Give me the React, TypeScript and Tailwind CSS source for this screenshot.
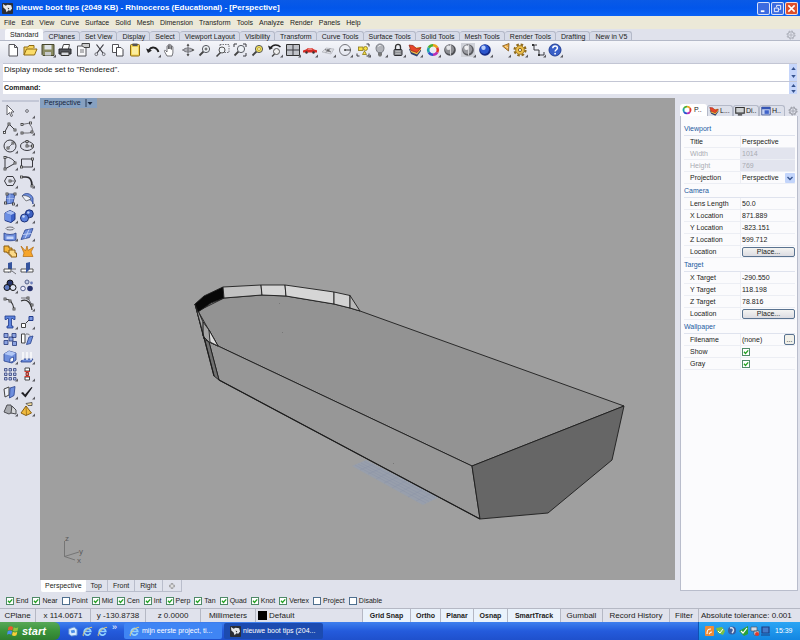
import React from "react";
import type { ReactNode } from "react";

type Tool = { name: string; art: ReactNode; flyout?: boolean };

const ink = { fill: "none", stroke: "#3a3a40", strokeWidth: 1 } as const;
const thin = { fill: "none", stroke: "#55555c", strokeWidth: 0.8 } as const;

function Art({ children }: { children: ReactNode }) {
  return (
    <svg viewBox="0 0 14 14" className="h-[14px] w-[14px] overflow-visible" aria-hidden="true">
      {children}
    </svg>
  );
}

function ToolButton({ tool }: { tool: Tool }) {
  return (
    <button type="button" aria-label={tool.name} className="flex min-w-0 flex-1 items-center justify-center">
      <Art>
        {tool.art}
        {tool.flyout && <path d="M15 11.500v3h-3z" fill="#5a5a60" />}
      </Art>
    </button>
  );
}

const Lens = ({ fill = "#eef2f6" }: { fill?: string }) => (
  <>
    <path d="M5.500 8.500 1.500 12.500" stroke="#444" strokeWidth="1.800" />
    <circle cx="8" cy="6" r="3.600" fill={fill} stroke="#55585f" strokeWidth="1" />
  </>
);

const Sphere = ({ a, b, c }: { a: string; b: string; c: string }) => (
  <>
    <circle cx="7" cy="7" r="5.800" fill={a} />
    <circle cx="6.500" cy="6.300" r="4.600" fill={b} />
    <circle cx="5.500" cy="4.800" r="2.200" fill={c} />
  </>
);

const ColorWheel = () => (
  <g fill="none" strokeWidth="2.600">
    <path d="M7 2.200A4.800 4.800 0 0 1 11.200 4.600" stroke="#e8a51c" />
    <path d="M11.200 4.600A4.800 4.800 0 0 1 11.200 9.400" stroke="#e0362c" />
    <path d="M11.200 9.400A4.800 4.800 0 0 1 7 11.800" stroke="#b82fb4" />
    <path d="M7 11.800A4.800 4.800 0 0 1 2.800 9.400" stroke="#2d4ed0" />
    <path d="M2.800 9.400A4.800 4.800 0 0 1 2.800 4.600" stroke="#1fa3ae" />
    <path d="M2.800 4.600A4.800 4.800 0 0 1 7 2.200" stroke="#4fb02c" />
  </g>
);

const Layers = () => (
  <>
    <path d="M1 6 3 11 9 13.500 13 8V5z" fill="#30406e" />
    <path d="M1.500 5 3 9 9 11.500 13 6.500 12.500 4z" fill="#f6c34c" />
    <path d="M1 2 3 7.500 9 9.500 13 4.500 8.500 5.500 5 2.500z" fill="#e8452a" stroke="#8e1f14" strokeWidth=".700" />
  </>
);

const Gear = ({ color }: { color: string }) => (
  <g fill="none" stroke={color}>
    <circle cx="7" cy="7" r="5.600" strokeWidth="1.400" strokeDasharray="2.200 2.200" />
    <circle cx="7" cy="7" r="4.500" strokeWidth="1.200" />
    <path d="M7 4v6M4 7h6" strokeWidth=".900" />
  </g>
);

const standardTools: Tool[] = [
  { name: "New", art: <path d="M3 1.500h5.500l3 3v8.500H3zM8.500 1.500v3h3" fill="#fff" stroke="#55555a" /> },
  { name: "Open", art: <><path d="M1 12V4h4l1-1.500h5V5" fill="#f7d560" stroke="#8f6b12" /><path d="M1 12 3.500 6H14l-2.500 6z" fill="#fbdc68" stroke="#8f6b12" /></> },
  { name: "Save", flyout: true, art: <><path d="M1 1.500h12v11H2L1 11.500z" fill="#8a8b62" stroke="#45462f" /><rect x="3.500" y="2" width="7" height="4.500" fill="#dfe3e6" /><rect x="4" y="9" width="6" height="3.500" fill="#c6c9cc" /></> },
  { name: "Print", art: <><path d="M4 6 5.500 1.500h6L10.500 6" fill="#fff" stroke="#444" /><path d="M1 6h12v5H1z" fill="#55575c" stroke="#26272b" /><path d="M3 9h8v3.500H3z" fill="#d8dade" stroke="#333" /></> },
  { name: "Properties", art: <><path d="M1.500 3h8.500v10H1.500z" fill="#f7f7f9" stroke="#55555a" /><path d="M6 .500h7.500v4H8L6 2.500z" fill="#ccc" stroke="#444" /><path d="M4 7h4M4 9h4" {...thin} /></> },
  { name: "Cut", art: <><path d="M3.500 1.500 10 10M10.500 1.500 4 10" {...ink} strokeWidth="1.200" /><circle cx="3.300" cy="11.200" r="1.400" {...thin} /><circle cx="10.700" cy="11.200" r="1.400" {...thin} /></> },
  { name: "Copy", art: <><path d="M1.500 1.500h6v8h-6z" fill="#fff" stroke="#55555a" /><path d="M5.500 4.500h4.500l2 2v6.500H5.500z" fill="#fff" stroke="#44444a" /></> },
  { name: "Paste", art: <><rect x="2.500" y="1.500" width="9" height="11.500" rx="1" fill="#f5d552" stroke="#8b6b14" /><rect x="4" y="4" width="6" height="7.500" fill="#fbeea0" /><rect x="4.500" y=".500" width="5" height="2.600" fill="#555" /></> },
  { name: "Undo", flyout: true, art: <><path d="M3 7C5.500 3 11 4 12.500 9" fill="none" stroke="#222" strokeWidth="1.800" /><path d="M0 5.500 2 10l4-2.500z" fill="#222" /></> },
  { name: "Pan", art: <path d="M4 13 1.500 8.500c-.6-1.200.6-1.600 1.300-.7L4 9V3.500c0-1 1.400-1 1.400 0V6 2c0-1 1.500-1 1.500 0v4-3.500c0-1 1.500-1 1.500 0V6.500 4c0-1 1.500-1 1.500 0v6L9 13z" fill="#fff" stroke="#55555a" strokeWidth=".800" /> },
  { name: "Rotate view", art: <><path d="M7 1v12M1 7h12" {...thin} /><ellipse cx="7" cy="7" rx="4.500" ry="2" {...thin} /><path d="M5.500 3 7 .500 8.500 3zM5.500 11 7 13.500 8.500 11zM11 5.500 13.500 7 11 8.500z" fill="#555" /></> },
  { name: "Zoom dynamic", art: <><Lens /><path d="M6.500 6h3M8 4.500v3" stroke="#333" strokeWidth=".800" /></> },
  { name: "Zoom window", art: <><path d="M4 1.500h9v8H4z" {...thin} strokeDasharray="1.500 1" /><path d="m4.500 9.500-4 4" stroke="#444" strokeWidth="1.600" /><circle cx="6" cy="7" r="3" fill="#eef2f6" stroke="#555" /></> },
  { name: "Zoom extents", art: <><Lens /><path d="M1 4V1h3M10 1h3v3M13 10v3h-3" {...ink} /></> },
  { name: "Zoom selected", art: <><Lens fill="#f5e25b" /><circle cx="8" cy="6" r="1.500" fill="#fff8c0" stroke="#a08c20" strokeWidth=".700" /></> },
  { name: "Undo view change", flyout: true, art: <><circle cx="8.500" cy="8.500" r="3" fill="#eee" stroke="#555" /><path d="m6.500 11-2.500 2.500" stroke="#444" strokeWidth="1.500" /><path d="M2.500 5C5 1 10 1.500 12.500 4" fill="none" stroke="#222" strokeWidth="1.500" /><path d="M0 2.500 1.500 7 5 5z" fill="#222" /></> },
  { name: "Four viewports", flyout: true, art: <><path d="M.5 1.500h13v11H.5z" fill="#c0c2c8" stroke="#333" /><path d="M7 1.500v11M.5 7h13" {...ink} /></> },
  { name: "Car view", flyout: true, art: <><path d="M0 7.500 3 6.500 5 5h4l2 1.500 3 .8v2.200H0z" fill="#d42a24" /><path d="M5.500 5.600h3l1 1h-5z" fill="#ffd0c8" /><circle cx="3.500" cy="9.500" r="1.200" fill="#333" /><circle cx="10.500" cy="9.500" r="1.200" fill="#333" /></> },
  { name: "Construction plane", flyout: true, art: <><path d="M1 9 5 5l8 1-3 5z" fill="#dcdde2" stroke="#b2b3ba" strokeWidth=".700" /><path d="M4 6.500 10 9M5 9.500l4-4" {...thin} /><path d="m6 6 3 1-2 2z" fill="#666" /></> },
  { name: "Circle center", flyout: true, art: <><circle cx="7" cy="7" r="5.500" {...thin} /><path d="M7 7h6" {...ink} /><circle cx="7" cy="7" r="1" fill="#444" /></> },
  { name: "Select", flyout: true, art: <><path d="M10.500 1h2.500v2.500M1 10.500V13h2.500M13 10.500V13h-2.500" {...ink} /><rect x="2.500" y="4" width="4.500" height="3.500" fill="#f6df45" stroke="#8c7815" strokeWidth=".800" /><circle cx="9.500" cy="5.500" r="2" fill="#f6df45" stroke="#8c7815" strokeWidth=".800" /><path d="M6.500 11.500 8.500 8l2 3.500z" fill="#f6df45" stroke="#8c7815" strokeWidth=".800" /></> },
  { name: "Hide", flyout: true, art: <><path d="M5 9.500C1.500 6 3 1 7 1s5.500 5 2 8.500z" fill="#b2b4ba" stroke="#777a82" /><path d="M5 10h4v2L8 13.500H6L5 12z" fill="#777" /><path d="M5.500 3.500c.5-.8 1-1 2-1" stroke="#fff" fill="none" /></> },
  { name: "Lock", flyout: true, art: <><path d="M4.500 6.500V4c0-3.500 5-3.500 5 0v2.500" fill="none" stroke="#333" strokeWidth="1.300" /><rect x="3" y="6.500" width="8" height="6" rx=".800" fill="#8e9095" stroke="#2c2c30" /><path d="M4.500 8.500h5M4.500 10.500h5" stroke="#ccc" strokeWidth=".600" /></> },
  { name: "Layers", flyout: true, art: <Layers /> },
  { name: "Object properties", flyout: true, art: <ColorWheel /> },
  { name: "Shade", art: <><Sphere a="#4e4f54" b="#8d8e93" c="#e4e5e8" /><path d="M7.500 1.500v11" stroke="#e4e4e8" strokeWidth=".800" /></> },
  { name: "Render preview", flyout: true, art: <><rect width="14" height="14" fill="#cfd1d8" /><Sphere a="#5a5b60" b="#9a9ba1" c="#f0f0f2" /><path d="M7.500 1.500v11" stroke="#e4e4e8" strokeWidth=".800" /></> },
  { name: "Render", flyout: true, art: <Sphere a="#142a86" b="#2b55cc" c="#b9cdf8" /> },
  { name: "Spotlight", flyout: true, art: <><path d="M6.500 3 13 .500 12.500 8z" fill="#ecaa42" stroke="#7e561a" strokeWidth=".800" /><path d="M9 3 12 5" stroke="#fbe3b0" /></> },
  { name: "Options", flyout: true, art: <><circle cx="7" cy="7" r="5.300" fill="none" stroke="#8e6b20" strokeWidth="2.600" strokeDasharray="2.400 1.760" /><circle cx="7" cy="7" r="4.300" fill="#eec04b" stroke="#a9822c" /><circle cx="7" cy="7" r="1.600" fill="#f4f1e8" stroke="#8e6b20" /></> },
  { name: "Dimension", flyout: true, art: <><path d="M2 2h4M3 2v5h5v5h5V9" {...ink} /><rect x="1" y="1" width="2" height="2" fill="#333" /><rect x="7" y="11" width="2" height="2" fill="#333" /></> },
  { name: "Help", flyout: true, art: <><circle cx="7" cy="7" r="6" fill="#3a60c8" stroke="#223f94" /><path d="M4.800 5.200c0-3 4.600-3 4.600-.2 0 1.700-2.300 1.800-2.300 3.600" fill="none" stroke="#fff" strokeWidth="1.500" /><circle cx="7.100" cy="10.700" r=".900" fill="#fff" /></> },
];

const blue = { fill: "#6f8fdd", stroke: "#27408c", strokeWidth: 0.8 } as const;
const node = (x: number, y: number) => <rect x={x - 1} y={y - 1} width="2" height="2" fill="#fff" stroke="#333" strokeWidth=".8" />;

const sideTools: Tool[] = [
  { name: "Pointer", art: <path d="M4 1v10l2.500-2.500L8 12.500l1.500-.7L8 8h3z" fill="#fff" stroke="#55555c" strokeWidth=".900" /> },
  { name: "Point", flyout: true, art: <circle cx="7" cy="7" r="1.400" {...thin} /> },
  { name: "Polyline", flyout: true, art: <><path d="M1.500 11.500 6 3l6 6" {...ink} />{node(1.5, 11.5)}{node(6, 3)}{node(12, 9)}</> },
  { name: "Control point curve", flyout: true, art: <><path d="M2 12h6c6 0 5-5 2-8M2 3.500 10 2" {...thin} />{node(2, 3.5)}{node(10.5, 2)}{node(2, 12)}{node(12, 11)}</> },
  { name: "Circle", flyout: true, art: <><circle cx="7" cy="7" r="6" {...ink} /><path d="m5 9 5-5" {...thin} />{node(5, 9)}{node(10, 4)}</> },
  { name: "Ellipse", flyout: true, art: <><ellipse cx="7" cy="7" rx="6.500" ry="4.500" {...ink} /><path d="M7 2.500V7h5" {...thin} />{node(7, 7)}{node(7, 2.5)}{node(12.5, 7)}</> },
  { name: "Arc", flyout: true, art: <><path d="M2 1c5 0 9 3 10.500 6L2 13z" {...ink} />{node(2, 13)}{node(2, 1.5)}{node(12, 7)}</> },
  { name: "Rectangle", flyout: true, art: <><path d="M1.500 3h11v8h-11z" {...ink} />{node(1.5, 11)}{node(12.5, 3)}</> },
  { name: "Polygon", flyout: true, art: <><path d="M4 2.500h6L12.500 7 10 11.500H4L1.500 7z" {...ink} /><path d="M7 7h5" {...thin} />{node(7, 7)}</> },
  { name: "Fillet curves", flyout: true, art: <><path d="M1 3h5c4 0 6 3 6 9" fill="none" stroke="#2c2c30" strokeWidth="1.700" />{node(1.5, 3)}{node(12, 12)}</> },
  { name: "Surface from corners", flyout: true, art: <><path d="M4 2h8l-2 9-7 1z" {...blue} /><path d="M7 2 6 11M3.500 6.500h7.500" stroke="#b6c8f2" strokeWidth=".700" />{node(4, 2)}{node(12, 2)}{node(10.5, 12)}{node(2.5, 11)}</> },
  { name: "Surface tools", flyout: true, art: <><path d="M2 4C5 0 11 1 13 6v6c-1-4-3-5-6-4z" {...blue} /><path d="M2 4c3-1 7 0 9 3L6 9z" fill="#eef1f8" stroke="#555" strokeWidth=".700" /></> },
  { name: "Box", flyout: true, art: <><path d="m2 4 5-2.500L12 4v6.500l-4 3-6-2z" fill="#3e62c8" stroke="#1c3380" /><path d="m2 4 6 2 4-2-5-2.500z" fill="#a9c0f4" /><path d="M8 6v7l-6-2V4z" fill="#6c8fe4" /></> },
  { name: "Boolean union", flyout: true, art: <><circle cx="9.300" cy="4.800" r="4" fill="#3d61c2" stroke="#1b3078" /><circle cx="4.500" cy="9" r="4" fill="#5b80db" stroke="#1b3078" /><circle cx="8.300" cy="3.500" r="1.300" fill="#b9ccf6" /><circle cx="3.500" cy="7.500" r="1.300" fill="#c6d6fa" /></> },
  { name: "Project curve", flyout: true, art: <><ellipse cx="7" cy="1.500" rx="4" ry="1.500" {...thin} /><path d="M1 6c3 2 9 2 12 0v7c-3 1-9 1-12 0z" {...blue} /><path d="M3.500 9.500h7V12h-7z" fill="#c8d7fa" /></> },
  { name: "Mesh", flyout: true, art: <><path d="m5 3 8-1.500-3.500 9L1 12.500z" {...blue} /><path d="m3 7.500 8.500-1M9 2.500 5 11.500" stroke="#dce6ff" strokeWidth=".700" /></> },
  { name: "Join", art: <><path d="M1 2h5v2h3v5H4V8H1z" fill="#f5b73b" stroke="#8a5c13" /><path d="M6 6h6v3h1.500v4H8v-2H6z" fill="#fbd988" stroke="#8a5c13" /></> },
  { name: "Explode", art: <path d="m1 2 4.500 5L7 2l1 4.500L13.500 3 11 8l2 4.500H3L4 9z" fill="#f6a52b" stroke="#b16a10" strokeWidth=".700" /> },
  { name: "Trim", art: <><path d="M9 0v7l-4 4V1z" fill="#35549e" /><path d="M1 7h7v3H1z" fill="#fff" stroke="#444" strokeWidth=".900" /><path d="m9 9 4 3M9 7h4" {...thin} /></> },
  { name: "Split", art: <><path d="M1 7h12v3H1z" fill="#fff" stroke="#444" strokeWidth=".900" /><path d="M10 0v7l-4 4V1z" fill="#35549e" /></> },
  { name: "Group", flyout: true, art: <><circle cx="7" cy="4" r="3" fill="#28356c" stroke="#111" /><circle cx="4" cy="8.500" r="3" fill="#5d79c0" stroke="#111" /><circle cx="10" cy="8.500" r="3" fill="#dfe5f4" stroke="#111" /></> },
  { name: "Ungroup", art: <><circle cx="7" cy="3" r="2" fill="#c2cbe4" stroke="#56618a" /><circle cx="3" cy="9.500" r="2.300" fill="#eef" stroke="#56618a" /><circle cx="10" cy="9.500" r="2.800" fill="#27326e" /><circle cx="11.500" cy="4" r="1.400" fill="#6f81bc" /></> },
  { name: "Edit points", art: <><path d="M2 2c5 0 8 4 9 10" fill="none" stroke="#333" strokeWidth="1.200" />{node(2, 2)}{node(7, 4)}{node(11, 12)}</> },
  { name: "Control points", flyout: true, art: <><path d="M1 4c6-3 10 2 11 9" fill="none" stroke="#333" strokeWidth="1.200" /><path d="M1 1h7l4 7" {...thin} />{node(8, 1)}{node(12, 8)}</> },
  { name: "Text", flyout: true, art: <path d="M2 1h10v3.500h-1.500L10 3.500H8.500V11H10v2H4v-2h1.500V3.500H4l-.5 1H2z" fill="#5c82dc" stroke="#203a8c" strokeWidth=".800" /> },
  { name: "Move", flyout: true, art: <><path d="M1.500 8.500h4v4h-4z" fill="#fff" stroke="#444" /><path d="M9 1.500h4v4H9z" fill="#7e9ae0" stroke="#203a8c" /><path d="m6 8 3-3" {...ink} /></> },
  { name: "Copy objects", art: <g fill="#8ba2e0" stroke="#27387a" strokeWidth=".800"><path d="M1 1.500h4v4H1zM9 1.500h4v4H9zM6 5h4v4H6zM1 8.500h4v4H1zM9.500 9.500h4v4h-4z" /></g> },
  { name: "Rotate", art: <><path d="M1.500 2h3.500v9H1.500z" fill="#fff" stroke="#444" /><path d="m9 5 4-1-2.500 7.500-4 1z" {...blue} /><path d="M6 2c2 0 3 0 4 1.500" {...thin} /></> },
  { name: "Solid edit", flyout: true, art: <><path d="m1 4 5-3 7 2v7l-4 3-8-2z" {...blue} /><path d="m1 4 8 2 4-3-7-2z" fill="#b3c8f6" /><path d="M7 8.500 10.500 7v4L7 12.500z" fill="#fff" stroke="#27408c" strokeWidth=".700" /></> },
  { name: "Analyze direction", flyout: true, art: <><path d="m1 11 3-2h9l-2 3H1z" {...blue} /><path d="M3 10V2m4 8V2m4 8V2" stroke="#fff" strokeWidth="1.300" /></> },
  { name: "Array", flyout: true, art: <g fill="#b6c2e6" stroke="#33417c" strokeWidth=".800"><path d="M1.500 1.500h2.500v2.500H1.500zM6 1.500h2.500v2.500H6zM10.500 1.500H13v2.500h-2.500zM1.500 6h2.500v2.500H1.500zM6 6h2.500v2.500H6zM10.500 6H13v2.500h-2.500zM1.500 10.500h2.500V13H1.500zM6 10.500h2.500V13H6zM10.500 10.500H13V13h-2.500z" /></g> },
  { name: "Align", flyout: true, art: <><path d="M5 1h4.500v3H5zM5 10h4.500v3H5z" fill="#fff" stroke="#444" /><path d="M6 5.500h2.500v3H6z" fill="#e07a6e" stroke="#7c1a12" strokeWidth=".800" /><path d="M4.500 4.500h5.500M4.500 9.500h5.500" stroke="#d53a2d" /></> },
  { name: "Orient", flyout: true, art: <><path d="m1 4 5-2v8l-4 2z" fill="#eef1f8" stroke="#444" /><path d="m7 3 5-1.500-1 9L6.500 13z" {...blue} /></> },
  { name: "Check", flyout: true, art: <path d="m1 8 2-1 2 2.500 6.500-7.500 1 .5L5.500 12.500z" fill="#1e1e22" /> },
  { name: "Primitives", flyout: true, art: <><path d="M4 3h4l2 7-4 2-5-2z" fill="#a9abb0" stroke="#4d4e53" /><path d="m9 4 4 4v4l-5-1z" fill="#d6d7da" stroke="#4d4e53" /></> },
  { name: "Pyramid", flyout: true, art: <><path d="m6 4 5.500 7L6 13.500 1 11z" fill="#f0ba3e" stroke="#8a6114" /><path d="m6 4 .500 9" stroke="#8a6114" strokeWidth=".700" /><path d="M6 1.500 12 .500v3H8z" fill="#f5dc9a" stroke="#444" strokeWidth=".800" /></> },
];

const menus = ["File", "Edit", "View", "Curve", "Surface", "Solid", "Mesh", "Dimension", "Transform", "Tools", "Analyze", "Render", "Panels", "Help"];
const toolTabs = ["Standard", "CPlanes", "Set View", "Display", "Select", "Viewport Layout", "Visibility", "Transform", "Curve Tools", "Surface Tools", "Solid Tools", "Mesh Tools", "Render Tools", "Drafting", "New in V5"];
const viewTabs = ["Perspective", "Top", "Front", "Right"];
const snaps: [string, boolean][] = [["End", true], ["Near", true], ["Point", false], ["Mid", true], ["Cen", true], ["Int", true], ["Perp", true], ["Tan", true], ["Quad", true], ["Knot", true], ["Vertex", true], ["Project", false], ["Disable", false]];

function RhinoMark() {
  return (
    <svg viewBox="0 0 12 12" className="h-[11px] w-[11px] shrink-0" aria-hidden="true">
      <rect width="12" height="12" rx="1" fill="#2b2e35" />
      <path d="m1 1 3 2 2-1 4 .500L11 6 9 8.500 7 8l-2 2-1-3-2.500-2z" fill="#e6e8ea" />
      <path d="m6 5 2 1-1 1z" fill="#222" />
    </svg>
  );
}

function ExplorerMark() {
  return (
    <svg viewBox="0 0 12 12" className="h-[11px] w-[11px] shrink-0" aria-hidden="true">
      <path d="M9.300 7.800A3.600 3.600 0 1 1 9.600 6H3.500" fill="none" stroke="#8fd0ff" strokeWidth="1.900" />
      <path d="M1.500 11C-.5 8 8 .5 11 1.500" fill="none" stroke="#f3d36a" strokeWidth="1" />
    </svg>
  );
}

function TitleBar() {
  const box = "flex h-[13px] w-[13px] items-center justify-center rounded-[2px] border border-white/80";
  return (
    <header className="flex h-[16px] shrink-0 items-center gap-[3px] bg-linear-to-b from-[#0a5ae6] via-[#0256ea] to-[#0a62f6] px-[2px] text-white">
      <RhinoMark />
      <h1 className="flex-1 truncate text-[8px] leading-[12px] font-bold">nieuwe boot tips (2049 KB) - Rhinoceros (Educational) - [Perspective]</h1>
      <div className="flex gap-px">
        <button type="button" aria-label="Minimize" className={box + " bg-[#3c6be0]"}>
          <svg viewBox="0 0 10 10" className="h-[9px] w-[9px]"><path d="M2 8h4" stroke="#fff" strokeWidth="2" /></svg>
        </button>
        <button type="button" aria-label="Restore" className={box + " bg-[#3c6be0]"}>
          <svg viewBox="0 0 10 10" className="h-[9px] w-[9px]" fill="none" stroke="#fff"><path d="M4 3.500V1.500h4.500V6H7M1.500 4.500H6V8.500H1.500z" /></svg>
        </button>
        <button type="button" aria-label="Close" className={box + " bg-[#dc4f2c]"}>
          <svg viewBox="0 0 10 10" className="h-[9px] w-[9px]"><path d="m1.500 1.500 7 7m0-7-7 7" stroke="#fff" strokeWidth="1.700" /></svg>
        </button>
      </div>
    </header>
  );
}

function Spin() {
  return (
    <span className="flex w-[8px] shrink-0 flex-col bg-[#c6d6fb]">
      <button type="button" aria-label="Scroll up" className="flex flex-1 items-center justify-center">
        <svg viewBox="0 0 6 4" className="h-[3px] w-[5px]"><path d="M0 4 3 0l3 4z" fill="#37538f" /></svg>
      </button>
      <button type="button" aria-label="Scroll down" className="flex flex-1 items-center justify-center">
        <svg viewBox="0 0 6 4" className="h-[3px] w-[5px]"><path d="m0 0 3 4 3-4z" fill="#37538f" /></svg>
      </button>
    </span>
  );
}

function Ribbon() {
  return (
    <>
      <div className="flex h-[11px] items-end border-b border-[#b4b9c8] pl-[5px]" role="tablist">
        {toolTabs.map((t, i) => (
          <button
            key={t}
            type="button"
            role="tab"
            aria-selected={i === 0}
            className={
              i === 0
                ? "h-[11px] rounded-t-[2px] bg-[#fafbfd] px-[5px] pt-px"
                : "h-[9px] rounded-t-[3px] border-t border-r border-[#b4b9c8] bg-[#d7dbe8] pr-[4px] pl-[5px] leading-[9px]"
            }
          >
            {t}
          </button>
        ))}
        <button type="button" aria-label="Toolbar options" className="mr-[4px] ml-auto">
          <svg viewBox="0 0 14 14" className="h-[10px] w-[10px]"><Gear color="#a3a6b0" /></svg>
        </button>
      </div>
      <div className="flex h-[22px] bg-linear-to-b from-[#f5f6fa] to-[#dcdfea] pb-[4px] pl-[4px]" role="toolbar" aria-label="Standard">
        <div className="flex w-[560px]">
          {standardTools.map((t) => <ToolButton key={t.name} tool={t} />)}
        </div>
      </div>
    </>
  );
}

function CommandArea() {
  return (
    <section className="px-[3px]">
      <div className="flex h-[19px] border-y border-[#c3c6d4] bg-white">
        <p className="flex-1 pl-[1px] text-[8px] leading-[11px]">Display mode set to "Rendered".</p>
        <Spin />
      </div>
      <label className="flex h-[12px] items-center bg-white">
        <span className="pl-[1px] text-[7px] font-bold">Command:</span>
        <input type="text" className="h-full min-w-0 flex-1 outline-none" />
        <span className="flex h-full"><Spin /></span>
      </label>
    </section>
  );
}

function Scene() {
  return (
    <svg viewBox="40 98 635 482" preserveAspectRatio="xMidYMid slice" className="h-full w-full" role="img" aria-label="Boat hull in perspective">
      <rect x="40" y="98" width="635" height="482" fill="#9f9f9f" />
      <path d="M352 466 366 460 439 497 423 505z" fill="#989fac" />
      <path d="m355 465 71 38M358 464l71 37.500M361 463l71 37M364 461.500l71 36.500M360 470l14-6M368 474l14-6M376 479l14-7M384 483l14-6M392 488l14-7M400 492l14-7M408 497l14-7M416 501l14-7" fill="none" stroke="#8790a6" strokeWidth=".600" opacity=".600" />
      <g stroke="#1d1d1d" strokeWidth=".900" strokeLinejoin="round">
        <path d="M198 311 224 298 262 295 286 296 334 304 350 308 360 311 624 406 472 466 218 346z" fill="#939393" />
        <path d="M209 342 218 346 472 466 480 519 219 380z" fill="#979797" />
        <path d="M195 304 204 339 209 342 219 380 214 376z" fill="#707070" />
        <path d="M195 304 203 322 209 330 218 346 209 342 204 337z" fill="#a4a4a4" />
        <path d="M209 330 218 346 210 342z" fill="#dedede" />
        <path d="M195 304 204 296 223 287 224 298 211 303 198 312z" fill="#070707" />
        <path d="M223 287 261 285 262 295 224 298z" fill="#c2c2c2" />
        <path d="M261 285H285L286 296 262 295z" fill="#d6d6d6" />
        <path d="m285 285 49 7v12l-48-8z" fill="#d6d6d6" />
        <path d="m334 292 16 3.500V308l-16-4z" fill="#d2d2d2" />
        <path d="m350 295.500 10 15.500-10-3z" fill="#b8b8b8" />
        <path d="M472 466 624 406 612 460 548 513 480 519z" fill="#666" />
        <path d="M203 322v14M204 337 214 376M219 380 480 519" fill="none" strokeWidth="1.100" />
      </g>
      <g fill="#777"><rect x="393" y="463" width="1" height="1" /><rect x="282" y="332" width="1" height="1" /><rect x="279" y="303" width="1" height="1" /></g>
      <path d="M64.500 541v15.500L75 560M64.500 556.500 79 552" fill="none" stroke="#707070" strokeWidth=".900" />
      <g fill="#5c5c5c" fontSize="8" fontFamily="Liberation Sans, sans-serif">
        <text x="65" y="541">z</text>
        <text x="79" y="554">y</text>
        <text x="77" y="563">x</text>
      </g>
    </svg>
  );
}

function Viewport() {
  return (
    <section className="relative min-h-0 flex-1 overflow-hidden">
      <div className="absolute inset-0"><Scene /></div>
      <button type="button" className="absolute top-0 left-0 flex h-[10px] items-center gap-[4px] bg-[#86a0c0] px-[4px] text-[#17263f]">
        Perspective
        <svg viewBox="0 0 8 8" className="h-[8px] w-[8px]"><path d="M1 0v8" stroke="#17263f" strokeWidth=".800" /><path d="M2.500 3h5L5 6z" fill="#17263f" /></svg>
      </button>
    </section>
  );
}

function ViewTabs() {
  return (
    <div className="flex h-[13px] items-start pl-px" role="tablist">
      {viewTabs.map((t, i) => (
        <button
          key={t}
          type="button"
          role="tab"
          aria-selected={i === 0}
          className={i === 0 ? "h-[12px] rounded-b-[2px] bg-white px-[4px]" : "h-[12px] border-r border-b border-[#b9bdcb] bg-[#dfe2ec] px-[5px]"}
        >
          {t}
        </button>
      ))}
      <button type="button" aria-label="New viewport" className="flex h-[12px] w-[19px] items-center justify-center border-r border-b border-[#b9bdcb]">
        <svg viewBox="0 0 8 8" className="h-[6px] w-[6px]"><path d="M3 .500h2V3h2.500v2H5v2.500H3V5H.500V3H3z" fill="#fff" stroke="#777" strokeWidth=".900" /></svg>
      </button>
    </div>
  );
}

function Check({ id, on }: { id: string; on: boolean }) {
  return (
    <span className="relative flex h-[8px] w-[8px] shrink-0">
      <input id={id} type="checkbox" defaultChecked={on} className="peer h-[8px] w-[8px] appearance-none border border-[#4f6f8e] bg-white checked:border-[#4f8a68]" />
      <svg viewBox="0 0 8 8" className="pointer-events-none absolute inset-0 hidden h-[8px] w-[8px] peer-checked:block"><path d="m2 3.800 1.500 1.700L6.200 2.300" fill="none" stroke="#21a121" strokeWidth="1.300" /></svg>
    </span>
  );
}

function Row({ label, id, dim, children }: { label: string; id: string; dim?: boolean; children: ReactNode }) {
  return (
    <div className="flex h-[12px] items-center border-b border-[#eceef4]">
      <label htmlFor={id} className={dim ? "w-[56px] shrink-0 pl-[6px] text-[#a9abb2]" : "w-[56px] shrink-0 pl-[6px]"}>{label}</label>
      <div className={dim ? "flex h-full min-w-0 flex-1 items-center bg-[#e2e4ee] pl-[2px] text-[#a9abb2]" : "flex h-full min-w-0 flex-1 items-center border-l border-[#eceef4] pl-px"}>{children}</div>
    </div>
  );
}

function Field({ label, value, dim }: { label: string; value: string; dim?: boolean }) {
  const id = label.toLowerCase().replace(" ", "-");
  return (
    <Row label={label} id={id} dim={dim}>
      <input id={id} type="text" defaultValue={value} disabled={dim} className="h-[9px] w-full min-w-0 bg-transparent leading-[9px] outline-none" />
    </Row>
  );
}

function Place({ id }: { id: string }) {
  return (
    <Row label="Location" id={id}>
      <button id={id} type="button" className="h-[10px] flex-1 rounded-[2px] border border-[#5a7390] bg-linear-to-b from-[#f4f4f2] to-[#dcdce2] leading-[8px]">Place...</button>
    </Row>
  );
}

function Heading({ children }: { children: ReactNode }) {
  return <h2 className="flex h-[14px] items-center border-b border-[#dfe3ee] text-[#235a9f]">{children}</h2>;
}

function PanelTabs() {
  const idle = "flex h-[11px] w-[26px] items-center gap-px overflow-hidden rounded-t-[3px] border border-b-0 border-[#b4b9c8] bg-[#dde0ea] px-px";
  return (
    <div className="flex h-[13px] items-end" role="tablist">
      <button type="button" role="tab" aria-selected="true" className="flex h-[12px] w-[27px] items-center gap-[2px] rounded-t-[3px] bg-white pl-[2px]">
        <svg viewBox="0 0 14 14" className="h-[10px] w-[10px]"><ColorWheel /></svg>P..
      </button>
      <button type="button" role="tab" aria-selected="false" className={idle}>
        <svg viewBox="0 0 14 14" className="h-[10px] w-[10px] shrink-0"><Layers /></svg>L...
      </button>
      <button type="button" role="tab" aria-selected="false" className={idle}>
        <svg viewBox="0 0 14 14" className="h-[10px] w-[10px] shrink-0"><path d="M1 2h12v8H1z" fill="#cfd2d4" stroke="#333" strokeWidth="1.500" /><path d="M4 12.500h6" stroke="#333" strokeWidth="1.600" /></svg>Di..
      </button>
      <button type="button" role="tab" aria-selected="false" className={idle}>
        <svg viewBox="0 0 14 14" className="h-[10px] w-[10px] shrink-0"><path d="M1 1.500h12v11H1z" fill="#c5d2f2" stroke="#33498c" /><path d="M1 1.500h12v3H1z" fill="#3555b4" /><rect x="5" y="6" width="6" height="5" fill="#4164ca" /></svg>H..
      </button>
      <button type="button" aria-label="Panel options" className="ml-auto">
        <svg viewBox="0 0 14 14" className="h-[10px] w-[10px]"><Gear color="#8d9099" /></svg>
      </button>
    </div>
  );
}

function Properties() {
  return (
    <aside className="flex w-[125px] shrink-0 flex-col pt-[5px] pr-[2px] pb-[2px] pl-[5px]">
      <PanelTabs />
      <div className="flex-1 border border-t-0 border-[#b9bdcc] bg-[#fbfbfd] pt-[6px] pr-[2px] pl-[3px]">
        <Heading>Viewport</Heading>
        <Field label="Title" value="Perspective" />
        <Field label="Width" value="1014" dim />
        <Field label="Height" value="769" dim />
        <Row label="Projection" id="projection">
          <span className="relative flex w-full items-center">
            <select id="projection" className="h-[10px] w-full appearance-none bg-transparent leading-[10px] outline-none">
              <option>Perspective</option>
              <option>Parallel</option>
            </select>
            <svg viewBox="0 0 10 10" className="pointer-events-none absolute right-0 h-[10px] w-[10px]"><rect width="10" height="10" rx="1" fill="#c3d5fb" /><path d="m2.500 4 2.500 2.500L7.500 4" fill="none" stroke="#38568f" strokeWidth="1.400" /></svg>
          </span>
        </Row>
        <Heading>Camera</Heading>
        <Field label="Lens Length" value="50.0" />
        <Field label="X Location" value="871.889" />
        <Field label="Y Location" value="-823.151" />
        <Field label="Z Location" value="599.712" />
        <Place id="camera-place" />
        <Heading>Target</Heading>
        <Field label="X Target" value="-290.550" />
        <Field label="Y Target" value="118.198" />
        <Field label="Z Target" value="78.816" />
        <Place id="target-place" />
        <Heading>Wallpaper</Heading>
        <Row label="Filename" id="filename">
          <input id="filename" type="text" defaultValue="(none)" className="h-[9px] min-w-0 flex-1 bg-transparent leading-[9px] outline-none" />
          <button type="button" aria-label="Browse" className="flex h-[11px] w-[11px] shrink-0 items-center justify-center rounded-[2px] border border-[#5a7390] bg-[#f1f0e9] leading-[8px]">...</button>
        </Row>
        <Row label="Show" id="show"><Check id="show" on /></Row>
        <Row label="Gray" id="gray"><Check id="gray" on /></Row>
      </div>
    </aside>
  );
}

function SnapBar() {
  return (
    <div className="flex h-[15px] shrink-0 items-center gap-[4px] pl-[6px]">
      {snaps.map(([name, on]) => (
        <span key={name} className="flex items-center gap-[2px]">
          <Check id={"snap-" + name} on={on} />
          <label htmlFor={"snap-" + name}>{name}</label>
        </span>
      ))}
    </div>
  );
}

function StatusBar() {
  const plain = "border-r border-[#b5b8c4] text-center";
  const active = "border-r border-[#b5b8c4] bg-[#eaf2fb] text-center text-[7px] font-bold";
  return (
    <div className="grid h-[14px] shrink-0 grid-cols-[36px_55px_55px_55px_55px_1fr_48px_30px_33px_34px_53px_42px_67px_29px_101px] border-t border-[#b5b8c4] text-[8px] leading-[13px] whitespace-nowrap">
      <button type="button" className={plain}>CPlane</button>
      <span className={plain}>x 114.0671</span>
      <span className={plain}>y -130.8738</span>
      <span className={plain}>z 0.0000</span>
      <span className={plain}>Millimeters</span>
      <button type="button" className="flex items-center gap-[2px] border-r border-[#b5b8c4] pl-[2px]">
        <span className="h-[9px] w-[9px] bg-black" />Default
      </button>
      <button type="button" className={active}>Grid Snap</button>
      <button type="button" className={active}>Ortho</button>
      <button type="button" className={active}>Planar</button>
      <button type="button" className={active}>Osnap</button>
      <button type="button" className={active}>SmartTrack</button>
      <button type="button" className={plain}>Gumball</button>
      <button type="button" className={plain}>Record History</button>
      <button type="button" className={plain}>Filter</button>
      <span className="pl-[2px]">Absolute tolerance: 0.001</span>
    </div>
  );
}

function TaskBar() {
  return (
    <footer className="flex h-[18px] shrink-0 items-stretch bg-linear-to-b from-[#3f80ee] via-[#245bdc] to-[#1f50cc] text-white">
      <button type="button" className="flex w-[60px] items-center gap-[3px] rounded-r-[6px] bg-linear-to-b from-[#58a858] via-[#3b943b] to-[#2f7e30] pl-[7px] text-[11px] leading-[12px] font-bold italic">
        <svg viewBox="0 0 12 12" className="h-[12px] w-[12px]" aria-hidden="true">
          <path d="M1.500 2C3 1 4.500 1 6 2L5.300 5.500c-1.500-1-3-1-4.500 0z" fill="#ee5b2d" />
          <path d="M6.700 2.300c1.500 1 3 1 4.600 0L10.500 6C9 6.800 7.500 6.800 6 6z" fill="#8fc63f" />
          <path d="M.7 6.300c1.500-1 3-1 4.400 0L4.300 9.800c-1.500-1-3-1-4.300 0z" fill="#4a8ef0" />
          <path d="M5.800 6.700c1.500 1 3 1 4.500 0l-.8 3.600c-1.500 1-3 1-4.500 0z" fill="#f8ce38" />
        </svg>
        start
      </button>
      <div className="flex w-[64px] items-center gap-[4px] pl-[7px]">
        <button type="button" aria-label="Show desktop">
          <svg viewBox="0 0 12 12" className="h-[11px] w-[11px]"><path d="M2 3 8 1l3 3v6l-6 1-3-2z" fill="#d9ecff" stroke="#5d8fd0" /><path d="m4 5 4-1 1 3-4 1z" fill="#4b8ee6" /></svg>
        </button>
        <button type="button" aria-label="Internet Explorer"><ExplorerMark /></button>
        <button type="button" aria-label="Browser"><ExplorerMark /></button>
        <span className="self-start text-[9px] leading-[11px]">»</span>
      </div>
      <div className="flex flex-1 gap-[2px] py-px">
        <button type="button" className="flex w-[98px] items-center gap-[2px] rounded-[2px] bg-[#3f85f4] pl-[5px]"><ExplorerMark />mijn eerste project, ti...</button>
        <button type="button" className="flex w-[99px] items-center gap-[2px] rounded-[2px] bg-[#1c4bb0] pl-[6px]"><RhinoMark />nieuwe boot tips (204...</button>
      </div>
      <div className="flex w-[102px] items-center border-l border-[#0c52b4] bg-linear-to-b from-[#2ba5f4] to-[#1286e2] pl-[5px]">
        <svg viewBox="0 0 66 12" className="h-[12px] w-[66px]" aria-hidden="true">
          <rect x="1" y="1" width="9" height="10" rx="1" fill="#ee8b35" /><path d="M3 9c0-4 1-5 4-5M5 9c1-1 1-2 3-2" fill="none" stroke="#fff" strokeWidth="1.100" />
          <path d="m12 3 6-1 3 4-2 4-5-2z" fill="#7bc143" /><path d="m14 6 2 2 3-4" fill="none" stroke="#fff" />
          <circle cx="28" cy="5.500" r="4" fill="#3a5d9e" /><path d="M26 3c3-1 5 2 2 5" fill="none" stroke="#dfe6f2" strokeWidth="1.400" />
          <path d="m35 6 5 5 4-2V1z" fill="#2aa13a" /><path d="m37 6 2 2 4-5" fill="none" stroke="#fff" strokeWidth="1.200" />
          <path d="M47 2h6v4h-6zM50 6h5v4h-5z" fill="#d6dde6" stroke="#4a5668" strokeWidth=".700" /><circle cx="53" cy="9" r="2" fill="#e0392b" />
          <path d="M58 2h7v6h-7zM57 10h9" fill="#4379c9" stroke="#1d3e84" strokeWidth="1.200" />
        </svg>
        <time className="pl-[5px]">15:39</time>
      </div>
    </footer>
  );
}

export default function App() {
  const rows = Array.from({ length: sideTools.length / 2 }, (_, i) => sideTools.slice(i * 2, i * 2 + 2));
  return (
    <div className="flex h-screen flex-col overflow-hidden bg-[#e0e2ec] font-['Liberation_Sans',Arial,sans-serif] text-[7px] leading-[10px] text-[#1b1b20]">
      <TitleBar />
      <nav className="flex h-[13px] shrink-0 items-center gap-[6px] bg-[#ece9d8] pl-[4px]">
        {menus.map((m) => <button key={m} type="button">{m}</button>)}
      </nav>
      <div className="shrink-0 pt-px"><Ribbon /></div>
      <CommandArea />
      <main className="flex min-h-0 flex-1 pt-[4px]">
        <div className="w-[40px] shrink-0 pl-[1px]" role="toolbar" aria-label="Main">
          <div className="mx-px h-[4px] border-b-2 border-[#c3c7d6]" />
          <div className="flex h-[316px] w-[35px] flex-col">
            {rows.map((pair) => (
              <div key={pair[0].name} className="flex flex-1 items-center">
                {pair.map((t) => <ToolButton key={t.name} tool={t} />)}
              </div>
            ))}
          </div>
        </div>
        <div className="flex min-w-0 flex-1 flex-col">
          <Viewport />
          <ViewTabs />
        </div>
        <Properties />
      </main>
      <SnapBar />
      <StatusBar />
      <TaskBar />
    </div>
  );
}
